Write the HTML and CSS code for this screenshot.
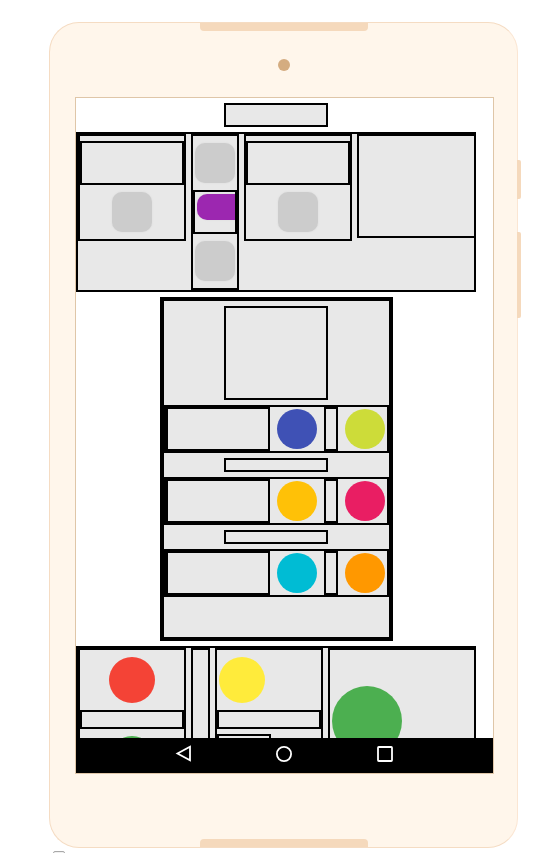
FILE: index.html
```html
<!DOCTYPE html>
<html lang="en">
<head>
<meta charset="utf-8">
<meta name="viewport" content="width=device-width, initial-scale=1">
<title>Designer</title>
<link rel="stylesheet" href="styles.css">
</head>
<body>
<main class="phone">
  <span class="tab tab-top"></span>
  <span class="tab tab-bottom"></span>
  <span class="camera"></span>
  <span class="key key-power"></span>
  <span class="key key-volume"></span>
  <div class="screen">
    <div class="content">
      <div class="box title"></div>

      <section class="box row">
        <div class="box column">
          <div class="box field"></div>
          <button class="chip" aria-label="Button"></button>
        </div>
        <div class="box column narrow">
          <button class="chip" aria-label="Button"></button>
          <div class="box clip"><button class="chip purple" aria-label="Button"></button></div>
          <button class="chip" aria-label="Button"></button>
        </div>
        <div class="box column">
          <div class="box field"></div>
          <button class="chip" aria-label="Button"></button>
        </div>
        <div class="box rest short"></div>
      </section>

      <section class="box panel">
        <div class="box picture"></div>
        <div class="box choices">
          <div class="box cell"></div>
          <button class="dot indigo" aria-label="Indigo"></button>
          <div class="box spacer"></div>
          <button class="dot lime" aria-label="Lime"></button>
        </div>
        <div class="box line"></div>
        <div class="box choices">
          <div class="box cell"></div>
          <button class="dot amber" aria-label="Amber"></button>
          <div class="box spacer"></div>
          <button class="dot pink" aria-label="Pink"></button>
        </div>
        <div class="box line"></div>
        <div class="box choices">
          <div class="box cell"></div>
          <button class="dot cyan" aria-label="Cyan"></button>
          <div class="box spacer"></div>
          <button class="dot orange" aria-label="Orange"></button>
        </div>
      </section>

      <section class="box row tall">
        <div class="box column">
          <button class="ball red" aria-label="Red"></button>
          <div class="box strip"></div>
          <button class="ball green" aria-label="Green"></button>
        </div>
        <div class="box gutter"></div>
        <div class="box column start">
          <button class="ball yellow" aria-label="Yellow"></button>
          <div class="box strip"></div>
          <div class="box half"></div>
        </div>
        <div class="box rest">
          <button class="ball big green" aria-label="Green"></button>
        </div>
      </section>
    </div>
    <nav class="nav">
      <button aria-label="Back"><svg viewBox="0 0 17 17"><path d="M15 1.8V15.2L2.5 8.5Z"/></svg></button>
      <button aria-label="Home"><svg viewBox="0 0 17 17"><circle cx="8" cy="9" r="7.1"/></svg></button>
      <button aria-label="Recent"><svg viewBox="0 0 17 17"><rect x="1" y="2" width="14" height="14" rx="0.8"/></svg></button>
    </nav>
  </div>
</main>
<input class="option" type="checkbox" aria-label="Option">
</body>
</html>
```
FILE: styles.css
```css
* { box-sizing: border-box; }

body {
  margin: 0;
  height: 100vh;
  padding: 22px 27px 0 49px;
  overflow: hidden;
  background: #fff;
  font-family: Roboto, sans-serif;
}

button { border: 0; padding: 0; flex: none; }

/* Device frame */
.phone {
  position: relative;
  display: flex;
  height: calc(100vh - 27px);
  padding: 74px 23px 73px 25px;
  border: 1px solid #f5dcc3;
  border-right-color: #fbe6d3;
  border-radius: 30px;
  background: #fff6eb;
}

.tab {
  position: absolute;
  left: 50%;
  width: 168px;
  height: 8px;
  margin-left: -84px;
  background: #f5d9bc;
}
.tab-top { top: 0; border-radius: 0 0 4px 4px; }
.tab-bottom { bottom: 0; border-radius: 4px 4px 0 0; }

.camera {
  position: absolute;
  top: 36px;
  left: 50%;
  width: 12px;
  height: 12px;
  margin-left: -6px;
  border-radius: 50%;
  background: #d4ac80;
}

.key {
  position: absolute;
  left: 100%;
  width: 4px;
  border-radius: 0 2px 2px 0;
  background: #f5d9bc;
}
.key-power { top: 137px; height: 39px; }
.key-volume { top: 209px; height: 86px; }

.screen {
  flex: 1;
  display: flex;
  flex-direction: column;
  min-width: 0;
  border: 1px solid #dfc6a8;
  background: #fff;
}

.content {
  flex: 1;
  min-height: 0;
  display: flex;
  flex-direction: column;
  align-items: center;
  gap: 5px;
  padding: 5px 17px 0 0;
  overflow: hidden;
}

/* Layout blocks */
.box { flex: none; border: 2px solid #000; background: #e8e8e8; }

.title { width: 104px; height: 24px; }

.row {
  display: flex;
  align-items: flex-start;
  gap: 5px;
  width: 100%;
}
.tall { height: 240px; align-items: stretch; }

.column {
  display: flex;
  flex-direction: column;
  align-items: center;
  gap: 7px;
  width: 108px;
  padding: 7px 0;
}
.column:has(.field) { padding-top: 5px; }
.narrow { width: 48px; }
.start { align-items: flex-start; }

.field { width: 104px; height: 44px; }
.strip { width: 104px; height: 19px; }
.half { width: 54px; height: 19px; margin-top: -2px; }
.gutter { width: 19px; }

.rest { flex: 1; border-right: 0; padding: 36px 2px 0; }
.short { height: 104px; }

.clip {
  width: 44px;
  height: 44px;
  padding: 2px 0 0 2px;
  overflow: hidden;
}

.panel {
  display: flex;
  flex-direction: column;
  align-items: center;
  gap: 5px;
  width: 233px;
  padding: 5px 0 40px;
  border-width: 4px;
}
.picture { width: 104px; height: 94px; }
.line { width: 104px; height: 14px; }

.choices {
  display: flex;
  align-items: center;
  gap: 7px;
  width: 100%;
}
.cell { width: 104px; height: 44px; }
.spacer { width: 14px; height: 44px; }

/* Buttons */
.chip {
  display: block;
  width: 40px;
  height: 40px;
  border-radius: 10px;
  background: #ccc;
  box-shadow: 0 0 2px #d8d8d8;
}
.purple { width: 50px; height: 26px; background: #9c27b0; }

.dot { width: 40px; height: 40px; border-radius: 50%; }
.ball { width: 46px; height: 46px; border-radius: 50%; }
.start .ball { margin-left: 2px; }
.big { display: block; width: 70px; height: 70px; }

.indigo { background: #3f51b5; }
.lime { background: #cddc39; }
.amber { background: #ffc107; }
.pink { background: #e91e63; }
.cyan { background: #00bcd4; }
.orange { background: #ff9800; }
.red { background: #f44336; }
.yellow { background: #ffeb3b; }
.green { background: #4caf50; }

/* System navigation */
.nav {
  display: flex;
  justify-content: center;
  flex: none;
  height: 35px;
  padding-bottom: 4px;
  background: #000;
}
.nav button {
  display: grid;
  place-items: center;
  width: 101px;
  background: none;
}
.nav svg {
  width: 17px;
  height: 17px;
  fill: none;
  stroke: #fff;
  stroke-width: 1.8;
}

.option {
  display: block;
  appearance: none;
  width: 12px;
  height: 12px;
  margin: 3px 0 0 4px;
  border: 1px solid #a8a8a8;
  border-radius: 2px;
  background: #f0f0f0;
}
```
